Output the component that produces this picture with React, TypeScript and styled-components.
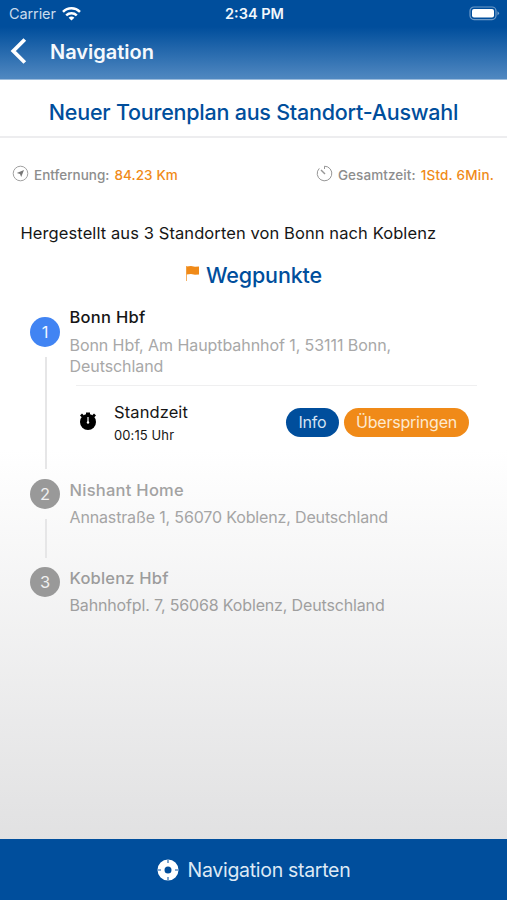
import React from 'react';
import styled, { createGlobalStyle } from 'styled-components';

const BLUE = '#004e9c';
const ORANGE = '#f08a18';

const GlobalStyle = createGlobalStyle`
  * { box-sizing: border-box; }
  body { margin: 0; font-family: Inter, "Liberation Sans", sans-serif; }
`;

const Screen = styled.div`
  width: 507px;
  height: 900px;
  display: flex;
  flex-direction: column;
  overflow: hidden;
  background: linear-gradient(#fff 0, #fff 450px, #e1e1e2 840px);
`;

const Text = styled.span<{ $size: number; $weight?: number; $color?: string; $spacing?: number; $line?: number }>`
  display: block;
  white-space: pre;
  font-size: ${(p) => p.$size}px;
  font-weight: ${(p) => p.$weight ?? 400};
  color: ${(p) => p.$color ?? '#161616'};
  letter-spacing: ${(p) => p.$spacing ?? 0}px;
  line-height: ${(p) => p.$line ?? 20}px;
`;

const Header = styled.header`
  height: 80px;
  flex: none;
  background: linear-gradient(${BLUE} 0, ${BLUE} 27px, #4f87c0 78px);
  border-bottom: 1px solid #9dbcdc;
`;

const StatusBar = styled.div`
  height: 27px;
  padding: 0 7px 0 9px;
  display: grid;
  grid-template-columns: 1fr auto 1fr;
  align-items: center;
`;

const Carrier = styled.div`
  display: flex;
  align-items: center;
  gap: 6px;
`;

const Battery = styled.svg`
  justify-self: end;
`;

const NavRow = styled.div`
  display: flex;
  align-items: center;
  height: 48px;
  padding-left: 10px;
  gap: 23px;
  span { padding-top: 1px; }
`;

const TitleBar = styled.div`
  height: 58px;
  flex: none;
  padding-top: 7px;
  display: flex;
  align-items: center;
  justify-content: center;
  border-bottom: 2px solid #ededef;
  background: #fff;
`;

const Stats = styled.div`
  display: flex;
  justify-content: space-between;
  margin-top: 24px;
  padding: 0 13px 0 12px;
  height: 26px;
`;

const Stat = styled.div`
  display: flex;
  gap: 5px;
  svg { margin-top: 3px; }
  span { margin-top: 3px; }
`;

const Summary = styled.div`
  margin: 35px 0 0 20.5px;
`;

const SectionTitle = styled.div`
  display: flex;
  justify-content: center;
  gap: 6px;
  margin-top: 18px;
  height: 28px;
`;

const FlagIcon = styled.svg`
  margin-top: 4px;
`;

const Stops = styled.ol`
  margin: 15px 0 0;
  padding: 0 30px;
  list-style: none;
`;

const Stop = styled.li<{ $height: number }>`
  height: ${(p) => p.$height}px;
  display: flex;
  gap: 9.5px;
`;

const Rail = styled.div`
  width: 30px;
  display: flex;
  flex-direction: column;
  align-items: center;
  padding-top: 13px;
`;

const Marker = styled.div<{ $active?: boolean }>`
  width: 30px;
  height: 30px;
  flex: none;
  border-radius: 50%;
  display: flex;
  align-items: center;
  justify-content: center;
  background: ${(p) => (p.$active ? '#4184f3' : '#999')};
`;

const Line = styled.div<{ $height: number }>`
  width: 2px;
  height: ${(p) => p.$height}px;
  flex: none;
  margin-top: 10px;
  margin-left: 1px;
  background: #e6e6e7;
`;

const StopBody = styled.div<{ $top: number }>`
  flex: 1;
  padding-top: ${(p) => p.$top}px;
`;

const Address = styled.div<{ $gap?: number }>`
  margin-top: ${(p) => p.$gap ?? 6}px;
`;

const Standing = styled.div`
  display: flex;
  align-items: flex-start;
  margin: 8px 0 0 6.5px;
  width: 401px;
  border-top: 1px solid #efeff0;
  padding-top: 15px;
`;

const StopwatchIcon = styled.svg`
  margin: 10px 17px 0 3px;
`;

const StandingText = styled.div`
  flex: 1;
`;

const Actions = styled.div`
  display: flex;
  gap: 5px;
  margin: 7px 8px 0 0;
`;

const Pill = styled.button<{ $width: number; $bg: string }>`
  width: ${(p) => p.$width}px;
  height: 29px;
  padding: 0 0 1px;
  border: 0;
  border-radius: 15px;
  display: flex;
  align-items: center;
  justify-content: center;
  background: ${(p) => p.$bg};
  font-family: inherit;
`;

const StartButton = styled.button`
  margin-top: auto;
  height: 61px;
  flex: none;
  border: 0;
  padding: 0;
  display: flex;
  align-items: center;
  justify-content: center;
  gap: 9px;
  background: ${BLUE};
  font-family: inherit;
`;

export default function App() {
  return (
    <Screen>
      <GlobalStyle />
      <Header>
        <StatusBar>
          <Carrier>
            <Text $size={14.5} $spacing={-0.1} $color="#c9dbed">Carrier</Text>
            <svg width="19" height="14" viewBox="0 0 19 14" fill="none" stroke="#fff" strokeWidth="2.5">
              <path d="M1 4.8C5.7.2 13.3.2 18 4.8" />
              <path d="M4.2 8.3c3-2.8 7.6-2.8 10.6 0" />
              <path d="M9.5 13.6 6.6 10.7c1.6-1.5 4.2-1.5 5.8 0z" fill="#fff" stroke="none" />
            </svg>
          </Carrier>
          <Text $size={14.5} $weight={600} $color="#f2f7fc">2:34 PM</Text>
          <Battery width="31" height="15" viewBox="0 0 31 15">
            <rect x="1" y="1" width="26" height="12.6" rx="4" fill="none" stroke="#6f9bc8" strokeWidth="1.2" />
            <rect x="3" y="3" width="22" height="8.6" rx="2" fill="#fff" />
            <path d="M28.5 5.2q3 2.1 0 4.2z" fill="#7ea5cd" />
          </Battery>
        </StatusBar>
        <NavRow>
          <svg width="17" height="26" viewBox="0 0 17 26" fill="none" stroke="#fff" strokeWidth="3.8">
            <path d="M14.8 1.5 3.3 13l11.5 11.5" />
          </svg>
          <Text $size={20} $weight={600} $color="#f5f9fd" $line={26}>Navigation</Text>
        </NavRow>
      </Header>

      <TitleBar>
        <Text $size={21.5} $weight={450} $color={BLUE} $spacing={-0.23} $line={28}>Neuer Tourenplan aus Standort-Auswahl</Text>
      </TitleBar>

      <Stats>
        <Stat>
          <svg width="17" height="17" viewBox="0 0 17 17">
            <circle cx="8.5" cy="8.5" r="7.3" fill="none" stroke="#a0a0a0" strokeWidth="1" />
            <path d="M12 5 9.2 12 8 9 4.8 8z" fill="#777" />
          </svg>
          <Text $size={13.5} $weight={500} $color="#8d8d8d">Entfernung:</Text>
          <Text $size={13.5} $weight={500} $color={ORANGE} $spacing={0.1}>84.23 Km</Text>
        </Stat>
        <Stat>
          <svg width="17" height="17" viewBox="0 0 17 17" fill="none" stroke="#969696" strokeWidth="1">
            <path d="M8.5 4V1.2A7.3 7.3 0 1 1 3.3 3.4" />
            <path d="M5 5l4 4" strokeWidth="1.4" />
          </svg>
          <Text $size={13.5} $weight={500} $color="#8d8d8d" $spacing={0.08}>Gesamtzeit:</Text>
          <Text $size={13.5} $weight={500} $color={ORANGE} $spacing={0.2}>1Std. 6Min.</Text>
        </Stat>
      </Stats>

      <Summary>
        <Text $size={16.5} $spacing={0.09}>Hergestellt aus 3 Standorten von Bonn nach Koblenz</Text>
      </Summary>

      <SectionTitle>
        <FlagIcon width="15" height="17" viewBox="0 0 15 17">
          <path d="M1 1h1v15H1z" fill="#f5b267" />
          <path d="M1.5 1.5 6 1l4 .8 4-.2v8l-4 .2-4-.8-4.5.5z" fill={ORANGE} />
        </FlagIcon>
        <Text $size={21.5} $weight={450} $color={BLUE} $spacing={-0.15} $line={28}>Wegpunkte</Text>
      </SectionTitle>

      <Stops>
        <Stop $height={162}>
          <Rail>
            <Marker $active><Text $size={16.5} $color="#eef4ff">1</Text></Marker>
            <Line $height={112} />
          </Rail>
          <StopBody $top={3}>
            <Text $size={16.5} $weight={450} $spacing={0.28}>Bonn Hbf</Text>
            <Address $gap={8}>
              <Text $size={16} $color="#a8a8a8" $spacing={-0.07} $line={21}>{'Bonn Hbf, Am Hauptbahnhof 1, 53111 Bonn,\nDeutschland'}</Text>
            </Address>
            <Standing>
              <StopwatchIcon width="18" height="20" viewBox="0 0 18 20">
                <circle cx="9" cy="11" r="8" fill="#000" />
                <path d="M7 1.5h4V4H7zM1 4.5 3 2.5l2 2-2 2zM17 4.5l-2-2-2 2 2 2z" fill="#000" />
                <path d="M9 6v5" stroke="#fff" strokeWidth="1.2" />
                <circle cx="9" cy="11.5" r="1.2" fill="#fff" />
              </StopwatchIcon>
              <StandingText>
                <Text $size={16.5} $spacing={0.1} $line={22}>Standzeit</Text>
                <Text $size={13} $spacing={0.1} $line={24}>00:15 Uhr</Text>
              </StandingText>
              <Actions>
                <Pill $width={53} $bg={BLUE}><Text $size={16} $spacing={-0.2} $color="#d5e3f2">Info</Text></Pill>
                <Pill $width={125} $bg={ORANGE}><Text $size={16} $spacing={-0.2} $color="#fde9d0">Überspringen</Text></Pill>
              </Actions>
            </Standing>
          </StopBody>
        </Stop>
        <Stop $height={88}>
          <Rail>
            <Marker><Text $size={16.5} $color="#f0f0f0">2</Text></Marker>
            <Line $height={39} />
          </Rail>
          <StopBody $top={14}>
            <Text $size={16.5} $weight={450} $spacing={0.26} $color="#a2a2a2" $line={21}>Nishant Home</Text>
            <Address>
              <Text $size={16} $color="#a5a5a5" $spacing={-0.15} $line={21}>Annastraße 1, 56070 Koblenz, Deutschland</Text>
            </Address>
          </StopBody>
        </Stop>
        <Stop $height={60}>
          <Rail>
            <Marker><Text $size={16.5} $color="#f0f0f0">3</Text></Marker>
          </Rail>
          <StopBody $top={14}>
            <Text $size={16.5} $weight={450} $spacing={0.2} $color="#9c9c9c" $line={21}>Koblenz Hbf</Text>
            <Address>
              <Text $size={16} $color="#9f9f9f" $spacing={-0.15} $line={21}>Bahnhofpl. 7, 56068 Koblenz, Deutschland</Text>
            </Address>
          </StopBody>
        </Stop>
      </Stops>

      <StartButton>
        <svg width="22" height="22" viewBox="0 0 22 22">
          <circle cx="11" cy="11" r="7" fill="none" stroke="#fff" strokeWidth="7" />
          <path d="M11 0v4M11 18v4M0 11h4M18 11h4" stroke="#5d8fc3" strokeWidth="1.6" />
        </svg>
        <Text $size={19.5} $spacing={-0.3} $color="#dde9f5" $line={26}>Navigation starten</Text>
      </StartButton>
    </Screen>
  );
}
